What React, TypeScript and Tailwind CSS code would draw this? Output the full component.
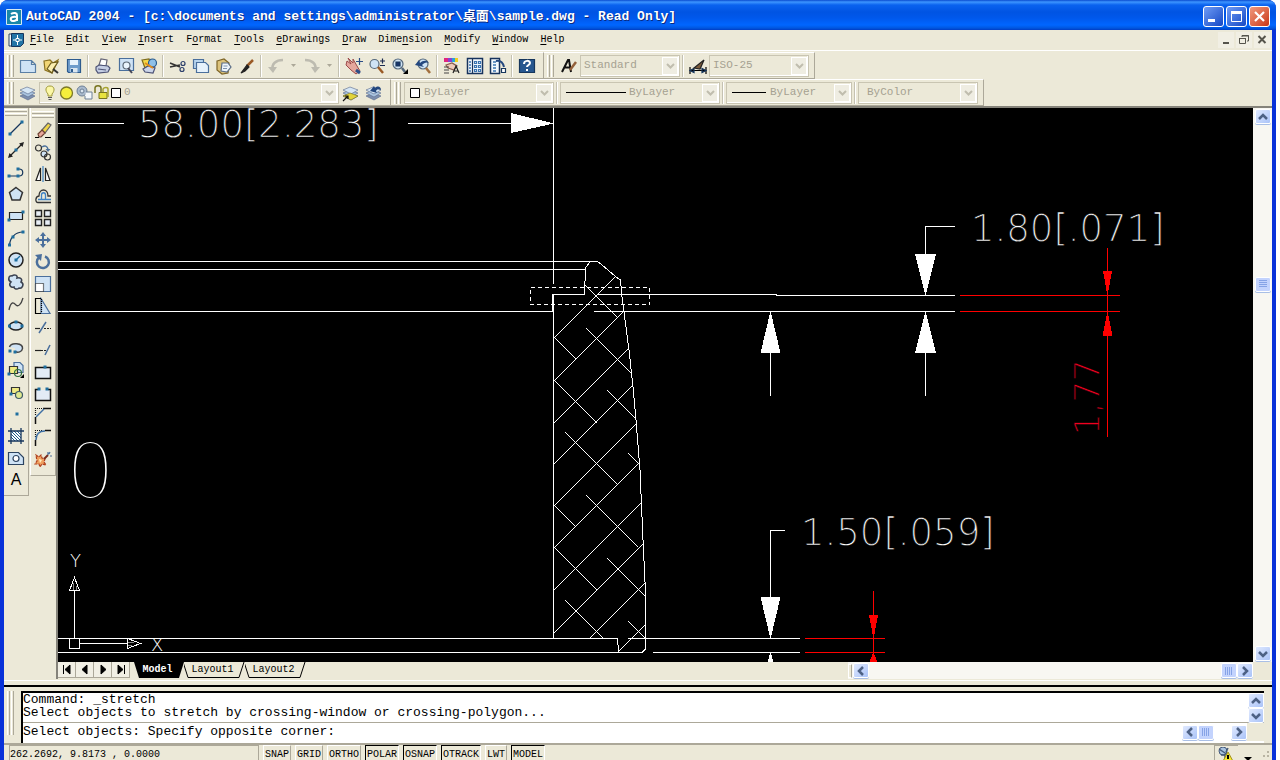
import type { ReactNode } from 'react';

const NAVY = '#16365c';
const BLUE = '#4a6f9c';
const PALE = '#cfe3f5';

function Icon({ children }: { children: ReactNode }) {
  return (
    <svg width="18" height="18" viewBox="0 0 18 18" fill="none" stroke={NAVY} strokeWidth="1.2">
      {children}
    </svg>
  );
}

function Dot({ x, y }: { x: number; y: number }) {
  return <rect x={x - 1.5} y={y - 1.5} width="3" height="3" fill="#1f6f9f" stroke="none" />;
}

/* ---------- standard toolbar icons ---------- */

const fileIcons = [
  {
    label: 'New',
    art: <path d="M1.5 3.5h11l4 4v8h-15zM12.5 3.5v4h4" fill={PALE} stroke="#5a7fa5" />,
  },
  {
    label: 'Open',
    art: (
      <>
        <path d="M2 4l6-1 3 3 5-3-3 7-3 6-7-3z" fill="#f2d675" stroke="#8d7320" />
        <path d="M5 12l4-6 7-1-4 6-2 5z" fill="#fbeeb0" stroke="#6c5b1c" />
        <path d="M11 12l5 4" stroke="#333" strokeWidth="2" />
      </>
    ),
  },
  {
    label: 'Save',
    art: (
      <>
        <path d="M2.5 2.5h13v13h-12l-1-1z" fill="#6f9ccb" stroke="#2d5b8e" />
        <path d="M5 3h8v5H5z" fill="#e9f3fc" stroke="none" />
        <path d="M5.5 11h7v4.5h-7z" fill="#dbe6f0" stroke="none" />
        <path d="M7 12v3" stroke="#2d5b8e" strokeWidth="2" />
      </>
    ),
  },
];

const printIcons = [
  {
    label: 'Plot',
    art: (
      <>
        <path d="M5 8l2-6 6 1-1 6z" fill="#fff" stroke="#667" />
        <path d="M2 10l3-2 9 1 2 2-2 4-10 1-2-3z" fill="#c4cde3" stroke="#4c5275" />
        <path d="M4 12l8 1" stroke="#4c5275" />
      </>
    ),
  },
  {
    label: 'Plot Preview',
    art: (
      <>
        <path d="M2.5 1.5h14v12h-14z" fill={PALE} stroke={BLUE} />
        <circle cx="9.5" cy="8.5" r="3.5" fill="#eaf5fd" stroke="#5d6b78" />
        <path d="M11 11l4 5" stroke="#445" strokeWidth="2" />
      </>
    ),
  },
  {
    label: 'Publish',
    art: (
      <>
        <path d="M2 3l7-1 2 5-6 4z" fill="#f4d848" stroke="#7b6a1c" />
        <circle cx="12.5" cy="6" r="4" fill="#8fc0e8" stroke="#2a5a8c" />
        <path d="M3 12l5-3 7 2-2 5-8-1z" fill="#ccd5ea" stroke="#4c5275" />
        <path d="M5 6l8 5" stroke="#e28c1e" strokeWidth="2" />
      </>
    ),
  },
];

const editIcons = [
  {
    label: 'Cut',
    art: (
      <>
        <path d="M1 6l10 4M1 10l10-2" stroke="#333" strokeWidth="1.5" />
        <circle cx="14" cy="6.5" r="2" stroke="#2b3e6b" />
        <circle cx="13" cy="12.5" r="2" stroke="#2b3e6b" />
      </>
    ),
  },
  {
    label: 'Copy',
    art: (
      <>
        <path d="M1.5 2.5h10v9h-10z" fill="#b8d5ef" stroke={BLUE} />
        <path d="M4.5 5.5h9l3 3v7h-12z" fill="#e6f2fc" stroke={BLUE} />
      </>
    ),
  },
  {
    label: 'Paste',
    art: (
      <>
        <path d="M2 4l7-2 5 4-1 10-6 1-5-4z" fill="#dcc27a" stroke="#7d6426" />
        <path d="M7 6h6l3 4-4 5-6-1z" fill="#eef5fb" stroke="#5b6d86" />
        <path d="M8.5 9h4M8 11.5h4" stroke="#7f93ad" />
      </>
    ),
  },
  {
    label: 'Match Properties',
    art: (
      <>
        <path d="M9 9l6-6" stroke="#9a5a26" strokeWidth="2.5" />
        <path d="M9 8l-6 8 4-2 4-4z" fill="#222" stroke="#222" />
      </>
    ),
  },
];

const zoomIcons = [
  {
    label: 'Pan Realtime',
    art: (
      <>
        <path d="M2 4l4 3-3-6 5 5 0-4 4 7 3 5-4 3-5-4-5-5z" fill="#e5a79d" stroke="#9b4a4a" strokeWidth="1" />
        <path d="M11 13l4 3" stroke="#2c4d86" strokeWidth="3" />
        <path d="M14.5 1v7M11 4.5h7" stroke="#2c4d86" />
      </>
    ),
  },
  {
    label: 'Zoom Realtime',
    art: (
      <>
        <circle cx="6.5" cy="7" r="4.5" fill={PALE} stroke="#56697c" />
        <path d="M10 10l5 6" stroke="#9a5a26" strokeWidth="2.5" />
        <path d="M12 4h5M14.5 1.5v5M12 8.5h5" stroke="#1c2b50" />
      </>
    ),
  },
  {
    label: 'Zoom Window',
    art: (
      <>
        <circle cx="7" cy="7" r="5" fill={PALE} stroke="#56697c" />
        <path d="M5 5h4v4H5z" fill="#17336b" />
        <path d="M11 11l3 4" stroke="#56697c" strokeWidth="2.5" />
        <path d="M17 12v5h-5z" fill="#000" stroke="none" />
      </>
    ),
  },
  {
    label: 'Zoom Previous',
    art: (
      <>
        <circle cx="9" cy="7" r="5" fill={PALE} stroke="#56697c" />
        <path d="M1 8l4-5 1 3c3-3 7-3 9 0-3-1-5 0-7 2l2 2z" fill="#24487f" stroke="none" />
        <path d="M12 11l4 5" stroke="#a3703e" strokeWidth="2.5" />
      </>
    ),
  },
];

const paletteIcons = [
  {
    label: 'Properties',
    art: (
      <>
        <path d="M1 1h4v4H1z" fill="#e0257f" stroke="none" />
        <path d="M5 1h4v4H5z" fill="#8a3fd0" stroke="none" />
        <path d="M9 1h3v4H9z" fill="#28a4d8" stroke="none" />
        <path d="M12 1h3v4h-3z" fill="#f0d020" stroke="none" />
        <path d="M3 8l6-2 5 3-3 4-6-2z" fill="#edc9b8" stroke="#8b5a4a" />
        <path d="M1 10h5M1 13h5M1 16h5" stroke="#444" />
        <path d="M10 16l3-7 3 7M11 14h4" stroke="#222" />
      </>
    ),
  },
  {
    label: 'DesignCenter',
    art: (
      <>
        <path d="M1.5 1.5h15v15h-15z" fill="#f3f8fd" stroke="#17335c" strokeWidth="1.5" />
        <path d="M6.5 2v14" stroke="#17335c" />
        <path d="M3 5h2M3 8h2M3 11h2M3 14h2" stroke="#3b74b0" strokeWidth="1.5" />
        <path d="M8.5 4.5h2v2h-2zM12.5 4.5h2v2h-2zM8.5 8.5h2v2h-2zM12.5 8.5h2v2h-2zM8.5 12.5h2v2h-2zM12.5 12.5h2v2h-2z" stroke="#3b74b0" />
      </>
    ),
  },
  {
    label: 'Tool Palettes',
    art: (
      <>
        <path d="M1.5 1.5h9v15h-9z" fill="#f3f8fd" stroke="#17335c" strokeWidth="1.5" />
        <path d="M4 5h3M4 8h3M4 11h3M4 14h3" stroke="#3b74b0" strokeWidth="1.5" />
        <path d="M7 4c5-1 7 2 8 6" stroke="#24487f" strokeWidth="2" />
        <path d="M12.5 11.5h4v4h-4z" fill="#fff" />
      </>
    ),
  },
];

const helpIcon = {
  label: 'Help',
  art: (
    <>
      <path d="M1.5 2.5h15v13h-15z" fill="#27578f" stroke="#16365c" />
      <path d="M6 7c0-4 6-4 6-1 0 2-3 2-3 4" stroke="#fff" strokeWidth="2" />
      <path d="M8 12h2v2H8z" fill="#fff" stroke="none" />
    </>
  ),
};

const layerArt = (
  <>
    <path d="M1 12l7-3 8 3-7 4z" fill="#7d8fae" stroke="#55678a" strokeWidth=".6" />
    <path d="M1 9l7-3 8 3-7 4z" fill="#a9c3df" stroke="#55678a" strokeWidth=".6" />
    <path d="M1 6l7-3 8 3-7 4z" fill="#d5e6f5" stroke="#55678a" strokeWidth=".6" />
  </>
);

/* ---------- draw toolbar ---------- */

const drawIcons = [
  { label: 'Line', art: <><path d="M3 15L15 3" /><Dot x={3} y={15} /><Dot x={15} y={3} /></> },
  {
    label: 'Construction Line',
    art: (
      <>
        <path d="M3 15L15 3" stroke="#222" />
        <path d="M1 17l1.5-5 3.5 3.5zM17 1l-1.5 5-3.5-3.5z" fill="#222" stroke="none" />
        <Dot x={9} y={9} />
      </>
    ),
  },
  {
    label: 'Polyline',
    art: (
      <>
        <path d="M2 13h10c5 0 5-7 0-7" />
        <Dot x={2} y={13} /><Dot x={11} y={13} /><Dot x={11} y={6} />
      </>
    ),
  },
  { label: 'Polygon', art: <path d="M9 2.5l6.5 5-2.5 7.5H5L2.5 7.5z" fill={PALE} stroke="#333" strokeWidth="1.5" /> },
  {
    label: 'Rectangle',
    art: <><path d="M2.5 5.5h13v7h-13z" fill={PALE} stroke="#222" /><Dot x={2} y={13} /><Dot x={16} y={5} /></>,
  },
  { label: 'Arc', art: <><path d="M2.5 16C3 9 8 3 16 3" /><Dot x={2.5} y={16} /><Dot x={6} y={8} /><Dot x={16} y={3} /></> },
  {
    label: 'Circle',
    art: (
      <>
        <circle cx="9" cy="9" r="7" fill={PALE} stroke="#222" strokeWidth="1.5" />
        <path d="M9 9l4-4" stroke="#1f6f9f" /><Dot x={9} y={9} />
      </>
    ),
  },
  {
    label: 'Revision Cloud',
    art: (
      <path
        d="M4 9C0 7 2 2 5 3c2-2 6-1 5 2 3-1 6 1 4 4 4 2 1 7-2 6-2 2-5 1-5-1-3 1-6-2-3-5z"
        fill={PALE}
        stroke="#3a4150"
        strokeWidth="1.5"
      />
    ),
  },
  { label: 'Spline', art: <path d="M2 15c2-10 5-7 7-5s5 0 7-7" stroke="#444" strokeWidth="1.3" /> },
  {
    label: 'Ellipse',
    art: (
      <>
        <ellipse cx="9" cy="9" rx="6.5" ry="4" fill={PALE} stroke="#222" strokeWidth="1.5" />
        <Dot x={2.5} y={9} /><Dot x={9} y={5} /><Dot x={15} y={9} />
      </>
    ),
  },
  {
    label: 'Ellipse Arc',
    art: (
      <>
        <path d="M2.5 8C4 3 16 4 15.5 9.5 15 13 11 14 8 12.5V9z" fill={PALE} stroke="none" />
        <path d="M2.5 8C4 3 16 4 15.5 9.5 15 13 11 14 8 12.5" stroke="#444" strokeWidth="1.5" />
        <Dot x={3} y={12} /><Dot x={8} y={13} />
      </>
    ),
  },
  {
    label: 'Insert Block',
    art: (
      <>
        <path d="M7 1.5h6l3 3v7H7z" fill={PALE} stroke={BLUE} />
        <path d="M2.5 5.5h8v7h-8z" fill="#f0eb83" stroke="#333" />
        <circle cx="11" cy="12" r="3.5" stroke="#2f6f3f" /><Dot x={2} y={13} />
        <path d="M17 13v4h-4z" fill="#000" stroke="none" />
      </>
    ),
  },
  {
    label: 'Make Block',
    art: (
      <>
        <path d="M4.5 4.5h8v6h-8z" fill="#f0eb83" stroke="#333" />
        <circle cx="12" cy="12" r="3.5" fill="#dfe98f" stroke="#3c5a66" /><Dot x={4} y={11} />
      </>
    ),
  },
  { label: 'Point', art: <Dot x={10} y={9} /> },
  {
    label: 'Hatch',
    art: (
      <>
        <path d="M4 4h10v10H4z" fill="#fff" stroke="none" />
        <path d="M4 10l4 4M4 7l7 7M4 4l10 10M7 4l7 7M10 4l4 4" stroke="#1f5d8c" strokeWidth="1" />
        <path d="M4 1v16M14 1v16M1 4h16M1 14h16" strokeWidth="1.3" />
      </>
    ),
  },
  {
    label: 'Region',
    art: (
      <>
        <path d="M1.5 3.5h10l5 5v7h-15z" fill={PALE} stroke="#2c4460" />
        <circle cx="9" cy="9.5" r="3" fill="#fff" stroke="#2c4460" />
      </>
    ),
  },
];

/* ---------- modify toolbar ---------- */

const modifyIcons = [
  {
    label: 'Erase',
    art: (
      <>
        <path d="M8 9l6-7 3 2-6 8z" fill="#f0d548" stroke="#666" />
        <path d="M4 13l4-4 3 3-4 4H5z" fill="#e8a79b" stroke="#6c4030" />
        <path d="M1 16.5h4M11 16.5h6" stroke="#000" />
      </>
    ),
  },
  {
    label: 'Copy Object',
    art: (
      <>
        <circle cx="4.5" cy="5" r="3" stroke="#333" />
        <circle cx="10" cy="11" r="3" fill={PALE} stroke="#333" />
        <circle cx="13.5" cy="14" r="3" stroke="#333" />
        <path d="M8 4c3-2 5-1 6 2" stroke={BLUE} strokeWidth="1.5" />
        <path d="M11.5 6h5L14 9z" fill={BLUE} stroke="none" />
      </>
    ),
  },
  {
    label: 'Mirror',
    art: (
      <>
        <path d="M6.5 3v12.5H2zM11.5 3v12.5H16z" fill="#fff" stroke="#222" />
        <path d="M9 1v16" stroke="#3d82c4" />
      </>
    ),
  },
  {
    label: 'Offset',
    art: (
      <>
        <path d="M17 15.5H4C1 15.5 1 9.500 5 9c0-8 9-8 9 0h3" stroke="#333" strokeWidth="1.3" />
        <path d="M17 12.5H4M7.500 12.500V8c0-3 4-3 4 0v4.500" stroke="#3d82c4" strokeWidth="1.3" />
      </>
    ),
  },
  {
    label: 'Array',
    art: <path d="M1.5 1.5h6v6h-6zM10.5 1.5h6v6h-6zM1.5 10.5h6v6h-6zM10.5 10.5h6v6h-6z" fill="#e8eef6" stroke="#222" strokeWidth="1.4" />,
  },
  {
    label: 'Move',
    art: (
      <>
        <path d="M9 3v12M3 9h12" stroke={BLUE} strokeWidth="2" />
        <path d="M9 1l3 4H6zM9 17l3-4H6zM1 9l4-3v6zM17 9l-4-3v6z" fill={BLUE} stroke="none" />
      </>
    ),
  },
  {
    label: 'Rotate',
    art: (
      <>
        <path d="M11 3.5a6 6 0 1 1-6 1" stroke={BLUE} strokeWidth="2.5" />
        <path d="M1 2l7-1-1 7z" fill={BLUE} stroke="none" />
      </>
    ),
  },
  {
    label: 'Scale',
    art: (
      <>
        <path d="M1.5 1.5h15v15h-15z" fill={PALE} stroke={BLUE} />
        <path d="M1.5 8.5h8v8h-8z" fill="#fff" stroke="#000" strokeDasharray="1 1" />
      </>
    ),
  },
  {
    label: 'Stretch',
    art: (
      <>
        <path d="M7 1.5l9 15H7z" fill={PALE} stroke={BLUE} />
        <path d="M7 16.5H1.5v-15H7" stroke="#000" />
        <path d="M7.5 2v14" stroke="#000" strokeDasharray="1 1" />
      </>
    ),
  },
  {
    label: 'Trim',
    art: <><path d="M5 14l7-11" stroke={BLUE} strokeWidth="1.5" /><path d="M1 9.5h5" stroke="#222" /><path d="M10 9.5h7" stroke="#222" strokeDasharray="2 1" /></>,
  },
  {
    label: 'Extend',
    art: <><path d="M11 14l5-10" stroke={BLUE} strokeWidth="1.5" /><path d="M1 9.5h6" stroke="#222" /><path d="M7 9.5h5" stroke="#222" strokeDasharray="2 1" /></>,
  },
  {
    label: 'Break at Point',
    art: <><path d="M1.5 4.5h15v11h-15z" fill="#e3ebf5" stroke="#111" strokeWidth="1.5" /><Dot x={11} y={4} /></>,
  },
  {
    label: 'Break',
    art: (
      <>
        <path d="M2 5h14v10H2z" fill="#e3ebf5" stroke="none" />
        <path d="M4 4.5H1.5v11h15v-11H14" stroke="#111" strokeWidth="1.5" />
        <Dot x={5} y={4} /><Dot x={13} y={4} />
      </>
    ),
  },
  {
    label: 'Chamfer',
    art: (
      <>
        <path d="M1.5 8V1.5h7" stroke="#111" strokeDasharray="1 1" />
        <path d="M9 1.5h8M1.5 10v7" stroke="#111" strokeWidth="1.5" />
        <path d="M2 10l8-8" stroke="#3d6fa4" strokeWidth="1.5" />
      </>
    ),
  },
  {
    label: 'Fillet',
    art: (
      <>
        <path d="M1.5 8V1.5h7" stroke="#111" strokeDasharray="1 1" />
        <path d="M11 1.5h6M1.5 11v6" stroke="#111" strokeWidth="1.5" />
        <path d="M2 11c0-6 3-9 9-9" stroke="#3d6fa4" strokeWidth="1.5" />
      </>
    ),
  },
  {
    label: 'Explode',
    art: (
      <>
        <path d="M2 4l3 2 2-2 1 3 3 1-1 3 2 3-4-1-2 3-1-3-4 0 2-3z" fill="#f0a060" stroke="#b0401c" strokeDasharray="3 1" />
        <path d="M5 8l3 1-2 3z" fill="#fff0c0" stroke="none" />
        <path d="M10 8l4-4" stroke="#7a2b1c" strokeWidth="2" />
        <path d="M14 1v3M16 5h2M16 1l-1 2" stroke={BLUE} />
      </>
    ),
  },
];

/* ---------- small building blocks ---------- */

type Tool = { label: string; art: ReactNode };

function ToolButtons({ tools }: { tools: Tool[] }) {
  return (
    <>
      {tools.map((t) => (
        <button key={t.label} type="button" aria-label={t.label} title={t.label} className="flex h-[22px] w-[23px] shrink-0 items-center justify-center">
          <Icon>{t.art}</Icon>
        </button>
      ))}
    </>
  );
}

function Grip({ height = 'h-[22px]' }: { height?: string }) {
  return (
    <span className={`flex w-3 shrink-0 gap-px pl-[3px] ${height}`}>
      <span className="w-[3px] border-r border-l border-r-[#aca899] border-l-white" />
      <span className="w-[3px] border-r border-l border-r-[#aca899] border-l-white" />
    </span>
  );
}

function TopGrip() {
  return (
    <span className="flex h-[9px] flex-col gap-px px-px pt-px">
      <span className="h-[3px] border-t border-b border-t-white border-b-[#aca899]" />
      <span className="h-[3px] border-t border-b border-t-white border-b-[#aca899]" />
    </span>
  );
}

function Sep() {
  return <span className="mx-[2px] h-[22px] w-[2px] shrink-0 border-l border-l-[#c5c2b2] bg-white" />;
}

function DropArrow({ label }: { label: string }) {
  return (
    <button type="button" aria-label={label} className="flex h-[22px] w-[13px] shrink-0 items-center justify-center">
      <svg width="5" height="3" viewBox="0 0 5 3"><path d="M0 0h5L2.5 3z" fill="#aca899" /></svg>
    </button>
  );
}

function Bar({ children }: { children: ReactNode }) {
  return (
    <div className="flex h-[27px] shrink-0 items-center border-t border-r border-b border-t-white border-r-[#aca899] border-b-[#aca899] pr-[5px]">
      {children}
    </div>
  );
}

type ComboProps = { label: string; value: string; box: string; pad: string; children?: ReactNode };

function Combo({ label, value, box, pad, children }: ComboProps) {
  return (
    <span className={`relative flex h-[22px] shrink-0 items-center ${box}`}>
      <select
        aria-label={label}
        disabled
        className={`h-full w-full appearance-none border border-[#c9c5b2] bg-[#ece9d8] text-[11px] text-[#a5a191] opacity-100 shadow-[inset_-1px_-1px_0_#fff] ${pad}`}
      >
        <option>{value}</option>
      </select>
      <span className="pointer-events-none absolute inset-y-0 left-[6px] flex items-center">{children}</span>
      <span className="pointer-events-none absolute inset-y-[2px] right-[2px] flex w-[16px] items-center justify-center border border-white bg-[#efede2]">
        <svg width="9" height="6" viewBox="0 0 9 6"><path d="M1 1l3.5 3.5L8 1" fill="none" stroke="#c0bdae" strokeWidth="2" /></svg>
      </span>
    </span>
  );
}

const chevrons = {
  up: 'M4 10l4-4 4 4',
  down: 'M4 6l4 4 4-4',
  left: 'M10 4L6 8l4 4',
  right: 'M6 4l4 4-4 4',
};

function ScrollButton({ dir, label }: { dir: keyof typeof chevrons; label: string }) {
  return (
    <button
      type="button"
      aria-label={label}
      className="flex h-[15px] w-4 shrink-0 items-center justify-center rounded-[2px] border border-white bg-gradient-to-br from-[#e0e9fe] to-[#aac3f8] shadow-[0_1px_0_#a9bfe6]"
    >
      <svg width="14" height="14" viewBox="1 1 14 14"><path d={chevrons[dir]} fill="none" stroke="#4d6185" strokeWidth="2.5" /></svg>
    </button>
  );
}

function Thumb({ vertical = false }: { vertical?: boolean }) {
  return (
    <span className="flex h-[15px] w-4 shrink-0 items-center justify-center rounded-[2px] border border-white bg-[#c3d3fd] shadow-[0_1px_0_#a9bfe6]">
      <svg width="8" height="8" viewBox="0 0 8 8" stroke="#86a3e6" shapeRendering="crispEdges">
        <path d={vertical ? 'M0 .5h8M0 2.5h8M0 4.5h8M0 6.5h8' : 'M.5 0v8M2.5 0v8M4.5 0v8M6.5 0v8'} />
      </svg>
    </span>
  );
}

/* ---------- title and menu ---------- */

function TitleBar() {
  return (
    <header className="flex h-[30px] shrink-0 items-center rounded-t-lg bg-[linear-gradient(to_bottom,#0a4bd0_0px,#3d95ff_2px,#0a62ef_5px,#0054e3_12px,#0058ec_18px,#0066ff_25px,#0057e0_28px,#003cc4_30px)] px-[6px] pt-[3px]">
      <svg width="16" height="16" viewBox="0 0 16 16" className="mr-1 shrink-0">
        <path d="M.5.5h15v15H.5z" fill="#1a86a8" stroke="#d5eaf2" />
        <path d="M5 5c3-2 6-1 6 1v6M11 8C6 7 4 9 5 11s5 1 6-1" fill="none" stroke="#fff" strokeWidth="2" />
      </svg>
      <h1 className="flex-1 truncate font-['Liberation_Mono','Noto_Sans_CJK_SC',monospace] text-[13px] leading-5 font-bold text-white [text-shadow:1px_1px_0_#0a2a80]">
        AutoCAD 2004 - [c:\documents and settings\administrator\桌面\sample.dwg - Read Only]
      </h1>
      <div className="flex gap-[2px]">
        <button type="button" aria-label="Minimize" className="h-[21px] w-[21px] rounded-[3px] border border-white bg-gradient-to-br from-[#6f9bf5] to-[#1546c4]">
          <svg width="19" height="19" viewBox="0 0 19 19"><path d="M4 12h7v3H4z" fill="#fff" /></svg>
        </button>
        <button type="button" aria-label="Maximize" className="h-[21px] w-[21px] rounded-[3px] border border-white bg-gradient-to-br from-[#6f9bf5] to-[#1546c4]">
          <svg width="19" height="19" viewBox="0 0 19 19"><path d="M4.5 5v9.5h10V5M4 5h11" fill="none" stroke="#fff" /><path d="M4 4h11v3H4z" fill="#fff" /></svg>
        </button>
        <button type="button" aria-label="Close" className="h-[21px] w-[21px] rounded-[3px] border border-white bg-gradient-to-br from-[#f0987c] to-[#c8330d]">
          <svg width="19" height="19" viewBox="0 0 19 19"><path d="M5 5l9 9M14 5l-9 9" stroke="#fff" strokeWidth="2.2" /></svg>
        </button>
      </div>
    </header>
  );
}

// [text before the access key, access key, rest]
const menus = [
  ['', 'F', 'ile'], ['', 'E', 'dit'], ['', 'V', 'iew'], ['', 'I', 'nsert'], ['F', 'o', 'rmat'], ['', 'T', 'ools'],
  ['', 'e', 'Drawings'], ['', 'D', 'raw'], ['Dime', 'n', 'sion'], ['', 'M', 'odify'], ['', 'W', 'indow'], ['', 'H', 'elp'],
];

function MenuBar() {
  return (
    <nav className="flex h-[21px] shrink-0 items-center border-b border-white pl-1">
      <svg width="17" height="17" viewBox="0 0 17 17" className="mr-[5px] shrink-0">
        <path d="M1 2h4v12H1z" fill="#f4f8fb" stroke="#2c4460" />
        <path d="M3.5 1.5h12v10l-3 3h-9z" fill="#2275a6" stroke="#16365c" />
        <path d="M9.5 3v10M5 8h9" stroke="#fff" /><path d="M8 6.5h3v3H8z" fill="#2275a6" stroke="#fff" />
      </svg>
      <div className="flex flex-1 gap-3">
        {menus.map(([pre, key, rest]) => (
          <button key={pre + key + rest} type="button" className="text-[10px] leading-[18px] text-black">
            {pre}<span className="underline underline-offset-2">{key}</span>{rest}
          </button>
        ))}
      </div>
      <div className="flex gap-[2px] pr-[2px]">
        <button type="button" aria-label="Minimize drawing" className="h-4 w-4 bg-[#f1efe4]">
          <svg width="16" height="16" viewBox="0 0 16 16"><path d="M5 10h6v2H5z" fill="#55544c" /></svg>
        </button>
        <button type="button" aria-label="Restore drawing" className="h-4 w-4 bg-[#f1efe4]">
          <svg width="16" height="16" viewBox="0 0 16 16" fill="none" stroke="#55544c"><path d="M6 5V3.5h6.5V9H11M3.5 6v5.5h6V6M3 6.5h7M6 4h7" /></svg>
        </button>
        <button type="button" aria-label="Close drawing" className="h-4 w-4 bg-[#f1efe4]">
          <svg width="16" height="16" viewBox="0 0 16 16" stroke="#55544c" strokeWidth="2"><path d="M4.5 4l7 7M11.5 4l-7 7" /></svg>
        </button>
      </div>
    </nav>
  );
}

/* ---------- toolbars ---------- */

function Toolbars() {
  return (
    <div className="flex shrink-0 flex-col border-b-2 border-[#85837a] pt-px">
      <div className="flex">
        <Bar>
          <Grip />
          <ToolButtons tools={fileIcons} />
          <Sep />
          <ToolButtons tools={printIcons} />
          <Sep />
          <ToolButtons tools={editIcons} />
          <Sep />
          <button type="button" aria-label="Undo" className="flex h-[22px] w-[23px] items-center justify-center">
            <Icon><path d="M6 13c-2-6 3-10 10-10" stroke="#bdbbb0" strokeWidth="2.5" /><path d="M1 10h9l-4 6z" fill="#bdbbb0" stroke="none" /></Icon>
          </button>
          <DropArrow label="Undo list" />
          <button type="button" aria-label="Redo" className="flex h-[22px] w-[23px] items-center justify-center">
            <Icon><path d="M2 3c7 0 12 4 10 10" stroke="#bdbbb0" strokeWidth="2.5" /><path d="M8 10h9l-5 6z" fill="#bdbbb0" stroke="none" /></Icon>
          </button>
          <DropArrow label="Redo list" />
          <Sep />
          <ToolButtons tools={zoomIcons} />
          <Sep />
          <ToolButtons tools={paletteIcons} />
          <Sep />
          <ToolButtons tools={[helpIcon]} />
        </Bar>
        <Bar>
          <Grip />
          <span className="w-px" />
          <ToolButtons
            tools={[{
              label: 'Text Style',
              art: <><path d="M2 15L8 3h1l2 12M4.5 10.5h6" stroke="#111" strokeWidth="2" /><path d="M10 13l6-8" stroke="#94603a" strokeWidth="2.5" /></>,
            }]}
          />
          <Combo label="Text style" value="Standard" box="w-[100px]" pad="pl-[3px]" />
          <Sep />
          <ToolButtons
            tools={[{
              label: 'Dimension Style',
              art: <><path d="M1 10v7M17 10v7M2 13.5h14" stroke="#000" /><path d="M1 13.5l4-2v4zM17 13.5l-4-2v4z" fill="#000" /><path d="M5 11l10-8-4 9z" fill="#7a5a3a" stroke="#222" /></>,
            }]}
          />
          <Combo label="Dimension style" value="ISO-25" box="w-[100px]" pad="pl-[3px]" />
        </Bar>
      </div>
      <div className="flex">
        <Bar>
          <Grip />
          <ToolButtons tools={[{ label: 'Layer Properties Manager', art: layerArt }]} />
          <Combo label="Layer" value="0" box="w-[300px]" pad="pl-[84px]">
            <svg width="76" height="18" viewBox="0 0 76 18" fill="none">
              <path d="M5 2c-5 0-5 5-2 8v2h4v-2c3-3 3-8-2-8z" fill="#fbf7a6" stroke="#a09a3a" />
              <path d="M3 13.5h4M3.5 15.5h3" stroke="#555" />
              <circle cx="21.5" cy="9" r="6" fill="#f5ef3c" stroke="#7d7a28" strokeWidth="1.3" />
              <circle cx="37" cy="7" r="5" fill="#a9bacd" stroke="#6d8096" />
              <path d="M41 8h6v7h-7v-3" fill="#f4f8fb" stroke="#6d8096" />
              <circle cx="37" cy="7" r="2" fill="#dbe6f0" stroke="#6d8096" />
              <path d="M50 9V4c0-3 6-3 6 0v4" stroke="#77741e" strokeWidth="1.5" />
              <path d="M54 8.5h8v6h-8z" fill="#e8e23e" stroke="#77741e" />
              <path d="M58 8V5c1-2 5-2 5 0v8" stroke="#a8a430" strokeWidth="1.5" />
              <path d="M66.5 4.5h9v9h-9z" fill="#fff" stroke="#000" />
            </svg>
          </Combo>
          <ToolButtons
            tools={[
              { label: 'Make Object Layer Current', art: <>{layerArt}<path d="M1 12l7-3 8 3-7 4z" fill="#e2d43a" stroke="#777020" strokeWidth=".6" /><path d="M1 17l5-5M3 12h3v3" stroke="#111" /></> },
              { label: 'Layer Previous', art: <>{layerArt}<path d="M5 7l4-5 1 2c3-3 6-1 6 2-2-1-4-1-5 1l1 2z" fill="#24487f" stroke="none" /></> },
            ]}
          />
        </Bar>
        <Bar>
          <Grip />
          <span className="w-px" />
          <Combo label="Color" value="ByLayer" box="w-[150px]" pad="pl-[19px]">
            <svg width="10" height="10"><path d="M.5.5h9v9h-9z" fill="#fff" stroke="#000" /></svg>
          </Combo>
          <Sep />
          <Combo label="Linetype" value="ByLayer" box="w-[160px]" pad="pl-[68px]">
            <svg width="60" height="1"><path d="M0 .5h60" stroke="#000" /></svg>
          </Combo>
          <Sep />
          <Combo label="Lineweight" value="ByLayer" box="w-[126px]" pad="pl-[43px]">
            <svg width="34" height="1"><path d="M0 .5h34" stroke="#000" /></svg>
          </Combo>
          <Sep />
          <Combo label="Plot style" value="ByColor" box="w-[120px]" pad="pl-[8px]" />
        </Bar>
      </div>
    </div>
  );
}

function SideBars() {
  return (
    <aside className="flex w-[52px] shrink-0 items-start gap-px">
      <div className="flex w-[25px] flex-col items-center border-r border-b border-[#aca899] pb-[4px]">
        <span className="w-full"><TopGrip /></span>
        <ToolButtons tools={drawIcons} />
        <button type="button" aria-label="Multiline Text" className="h-[22px] w-[23px] font-['Liberation_Sans',sans-serif] text-[16px] leading-[22px] text-black">A</button>
      </div>
      <div className="flex w-[26px] flex-col items-center border-r border-b border-l border-r-[#aca899] border-b-[#aca899] border-l-white pt-[2px] pb-[4px]">
        <span className="w-full"><TopGrip /></span>
        <ToolButtons tools={modifyIcons} />
      </div>
    </aside>
  );
}

/* ---------- model space ---------- */

const outline = [
  'M58 123.5H124M408 123.5H512',
  'M553.5 108V284M553.5 295V638',
  'M58 261.5H597M58 269.5H585M58 311.5H553',
  'M552.5 311V294.5H584.5L585.5 268L590 261.5H597L601 264L616 277L620.5 280L622 297L624 312L629 350L633 387L636 420L640 470L643 540L645.5 592V649L642 652.5',
  'M597 294.5H776V295.5H955M594 311.5H955',
  'M58 638.5H617.5L618.5 652M628 638.5H800M58 652.5H642M653 652.5H800',
  'M770.5 352V396M925.5 352V396M955 226.5H925.5V255M785 530.5H770.5V598',
];

const hatch = [
  'M554 338L616 276M554 381L623 312M554 423L629 348M554 464L633 385M554 506L636 424M554 548L640 462',
  'M554 590L642 502M554 633L644 543M590 638L645 583M618 652L645 625',
  'M585 285L617 317M555 338L576 359M586 328L631 373M555 381L597 423M607 390L636 419M565 432L617 484',
  'M628 453L640 465M555 506L576 527M586 495L638 547M555 548L597 590M607 558L645 596M565 600L603 638M628 621L645 638',
];

const cadText = "font-['DejaVu_Sans','Roboto',sans-serif] font-extralight";

function Drawing() {
  return (
    <svg className="block h-full w-full bg-black" role="img" aria-label="Section drawing with dimensions">
      {/* coordinates are window pixels, shifted to the viewport's corner */}
      <g transform="translate(-58 -108)">
        {/* the black stroke trims the glyphs to a hairline */}
        <g fill="#fff" stroke="#000" className={cadText}>
          <g fontSize="37" strokeWidth=".5">
            <text x="138" y="137">58.00[2.283]</text>
            <text x="971" y="241">1.80[.071]</text>
            <text x="801" y="545">1.50[.059]</text>
          </g>
          <text x="17" y="498" fontSize="77" strokeWidth="2.2">00</text>
        </g>
        <g fill="#fff" className={cadText} fontSize="18">
          <text x="70" y="567">Y</text>
          <text x="151" y="651">X</text>
        </g>
        <g fill="none" stroke="#fff" shapeRendering="crispEdges">
          {outline.map((d) => <path key={d} d={d} />)}
          {hatch.map((d) => <path key={d} d={d} />)}
          <rect x="530.5" y="287.5" width="119" height="17" strokeDasharray="4 3" />
        </g>
        <g fill="#fff" shapeRendering="crispEdges">
          <path d="M511 113v20l43-9.5z" />
          <path d="M770.5 311l10 42h-20zM925.5 311l10.5 42h-21zM925.5 296L936 254h-21zM770.5 639l10-42h-20z" />
          <path d="M770.5 652l3 10h-6z" />
        </g>
        <g fill="none" stroke="#fff" shapeRendering="crispEdges">
          <path d="M69.5 638.5h10v10h-10zM74.5 638V591M80 643.5h47M69.5 590.5l5-13 5 13zM127.5 638.5v10l13-5z" />
          <path d="M73.5 583v7M76.5 586v4M128 642.5h6M128 645.5h4" stroke="#888" />
        </g>
        <g stroke="#f00" fill="none" shapeRendering="crispEdges">
          <path d="M960 295.5H1120M960 311.5H1120M1107.5 248V437" />
          <path d="M805 638.5H885M805 652.5H885M873.5 591V662" />
        </g>
        <g fill="#f00" shapeRendering="crispEdges">
          <path d="M1107.5 296l4.5-25h-9zM1107.5 311l5 25h-10zM873.5 639l4.5-24h-9zM873.5 652l4 10h-8z" />
        </g>
        <text transform="translate(1099 435) rotate(-90)" fontSize="34" fill="#f00020" stroke="#000" strokeWidth=".5" className={cadText}>1,77</text>
      </g>
    </svg>
  );
}

const pageButtons = [
  { label: 'First layout', d: 'M5.5 3v9M12 3v9L7 7.5z' },
  { label: 'Previous layout', d: 'M11 3v9L6 7.5z' },
  { label: 'Next layout', d: 'M7 3v9l5-4.5z' },
  { label: 'Last layout', d: 'M6 3v9l5-4.5zM12.5 3v9' },
];

function LayoutTabs() {
  return (
    <div className="flex h-[17px] shrink-0 items-stretch">
      <div className="flex flex-1">
        {pageButtons.map((b) => (
          <button key={b.label} type="button" aria-label={b.label} className="h-4 w-[18px] border-r border-b border-[#aca899] bg-[#f1efe4]">
            <svg width="17" height="15" viewBox="0 0 17 15" fill="#000" stroke="#000" strokeWidth="1"><path d={b.d} /></svg>
          </button>
        ))}
        <div role="tablist" className="ml-1 flex">
          <button role="tab" aria-selected="true" type="button" className="h-4 w-[50px] bg-black pr-[3px] text-[10px] leading-4 font-bold text-white [clip-path:polygon(0_0,100%_0,45px_100%,5px_100%)]">
            Model
          </button>
          {['Layout1', 'Layout2'].map((name) => (
            <button key={name} role="tab" aria-selected="false" type="button" className="relative h-4 w-[61px] pr-1 text-[10px] leading-4 text-black">
              <svg className="absolute inset-0" width="61" height="16" viewBox="0 0 61 16" fill="none" stroke="#000"><path d="M-1 0l5 15.5h51L60 0" /></svg>
              {name}
            </button>
          ))}
        </div>
      </div>
      <div className="flex w-[405px] items-center bg-[#f8f7f2]">
        <span className="mr-px h-[14px] w-1 border border-white border-r-[#aca899] bg-[#ece9d8]" />
        <ScrollButton dir="left" label="Scroll left" />
        <span className="flex-1" />
        <Thumb />
        <ScrollButton dir="right" label="Scroll right" />
      </div>
      <span className="w-[19px]" />
    </div>
  );
}

/* ---------- command line and status ---------- */

function CommandLine() {
  return (
    <section className="flex h-[58px] shrink-0 border-t-2 border-black pt-[4px] pr-2">
      <Grip height="h-[44px]" />
      <div className="ml-[5px] flex flex-1 flex-col border-t-2 border-l-2 border-black bg-white text-[13px] text-black">
        <div className="flex h-[30px] shrink-0 justify-between border-b border-[#aca899]">
          <div className="leading-[13px]">
            <p>Command: _stretch</p>
            <p>Select objects to stretch by crossing-window or crossing-polygon...</p>
          </div>
          <div className="flex flex-col">
            <ScrollButton dir="up" label="Scroll history up" />
            <ScrollButton dir="down" label="Scroll history down" />
          </div>
        </div>
        <div className="flex h-[18px] items-center">
          <label htmlFor="command" className="whitespace-pre">Select objects: Specify opposite corner:</label>
          <input id="command" type="text" className="min-w-0 flex-1 outline-none" />
          <ScrollButton dir="left" label="Scroll command left" />
          <Thumb />
          <span className="w-[17px]" />
          <ScrollButton dir="right" label="Scroll command right" />
          <span className="h-full w-[17px] bg-[#ece9d8]" />
        </div>
      </div>
    </section>
  );
}

const toggles = [
  { name: 'SNAP', on: false }, { name: 'GRID', on: false }, { name: 'ORTHO', on: false }, { name: 'POLAR', on: true },
  { name: 'OSNAP', on: true }, { name: 'OTRACK', on: true }, { name: 'LWT', on: false }, { name: 'MODEL', on: true },
];

function StatusBar() {
  return (
    <footer className="flex h-[17px] shrink-0 items-start overflow-hidden border-t-2 border-[#aca899] pl-[5px]">
      <output className="mr-1 h-5 w-[250px] border-t border-r border-l border-[#aca899] text-[10px] leading-[18px] whitespace-pre text-black">
        262.2692, 9.8173 , 0.0000
      </output>
      <div className="flex flex-1 gap-1">
        {toggles.map((t) => (
          <button
            key={t.name}
            type="button"
            aria-pressed={t.on}
            className={`h-5 border px-px text-[10px] leading-[18px] text-black ${t.on ? 'border-black border-r-white' : 'border-white border-r-[#aca899]'}`}
          >
            {t.name}
          </button>
        ))}
      </div>
      <button type="button" aria-label="Communication Center" className="h-5 w-6 border-t border-l border-[#aca899]">
        <svg width="22" height="18" viewBox="0 0 22 18">
          <circle cx="8" cy="4" r="4" fill="#a9c3df" stroke="#44597a" />
          <path d="M4 2l9 6M6 8h4v4M13 1l-2 4" stroke="#44597a" strokeWidth="1.5" fill="none" />
          <path d="M13 5l6 11H7z" fill="#f7e830" stroke="#a09020" />
          <path d="M13 8v4M13 13v2" stroke="#000" strokeWidth="2" />
        </svg>
      </button>
      <button type="button" aria-label="Status bar menu" className="h-5 w-5">
        <svg width="20" height="18" viewBox="0 0 20 18"><path d="M6 11h8l-4 4z" fill="#000" /></svg>
      </button>
      <svg width="14" height="18" viewBox="0 0 14 18" fill="#b8b4a2"><path d="M9 6h2v2H9zM5 10h2v2H5zM9 10h2v2H9z" /></svg>
    </footer>
  );
}

export default function App() {
  return (
    <div className="h-screen overflow-hidden bg-white pr-1">
      <div className="flex h-full flex-col rounded-t-lg bg-[#0831d9] font-['Liberation_Mono','Noto_Sans_CJK_SC',monospace]">
        <TitleBar />
        <div className="mx-1 flex min-h-0 flex-1 flex-col bg-[#ece9d8]">
          <MenuBar />
          <Toolbars />
          <main className="flex min-h-0 flex-1">
            <SideBars />
            <div className="flex min-w-0 flex-1 flex-col border-l-2 border-[#85837a]">
              <div className="flex min-h-0 flex-1">
                <div className="min-w-0 flex-1"><Drawing /></div>
                <div className="flex w-[19px] flex-col items-center bg-[#f8f7f2] py-px">
                  <ScrollButton dir="up" label="Scroll up" />
                  <span className="grow-[152]" />
                  <Thumb vertical />
                  <span className="grow-[352]" />
                  <ScrollButton dir="down" label="Scroll down" />
                </div>
              </div>
              <LayoutTabs />
            </div>
          </main>
          <div className="mt-px h-[5px] shrink-0 border-t border-white bg-[#ece9d8]" />
          <CommandLine />
          <StatusBar />
        </div>
      </div>
    </div>
  );
}
